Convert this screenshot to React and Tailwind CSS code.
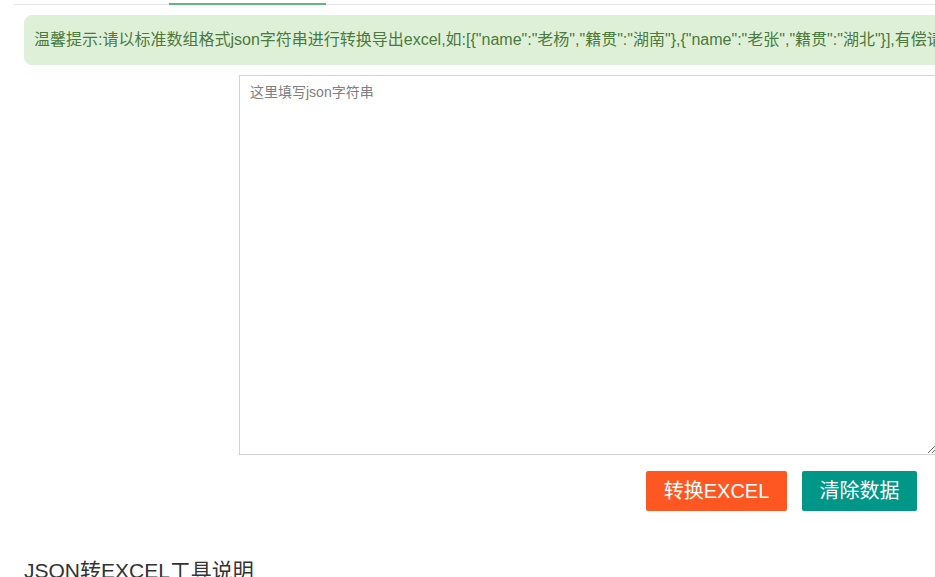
import React, { useState } from "react";

const tip =
  '温馨提示:请以标准数组格式json字符串进行转换导出excel,如:[{"name":"老杨","籍贯":"湖南"},{"name":"老张","籍贯":"湖北"}],有偿请联系作者定制';

const App = () => {
  const [json, setJson] = useState("");

  return (
    <div
      className="w-[935px] h-[577px] overflow-hidden bg-white"
      style={{ fontFamily: '"Liberation Sans", "Noto Sans CJK SC", sans-serif' }}
    >
      {/* tab bar line */}
      <div className="pl-[14px] pt-[3px]">
        <div className="relative h-[2px] border-b border-[#e6e6e6]">
          <div className="absolute left-[155px] top-0 h-[2px] w-[157px] bg-[#5FB878]" />
        </div>
      </div>

      {/* tip */}
      <div className="pl-[24px] pt-[10px]">
        <div className="w-[1200px] h-[50px] flex items-center pl-[10px] rounded-[8px] bg-[#dff0d8] text-[#4a7a3c] text-[16px] whitespace-nowrap">
          {tip}
        </div>
      </div>

      {/* textarea */}
      <div className="pl-[239px] pt-[10px]">
        <textarea
          value={json}
          onChange={(e) => setJson(e.target.value)}
          placeholder="这里填写json字符串"
          className="block w-[698px] h-[380px] border border-[#d2d2d2] px-[10px] py-[6px] text-[14px] leading-[20px] text-[#333] placeholder:text-[#808080] outline-none"
        />
      </div>

      {/* buttons */}
      <div className="flex justify-end gap-[15px] pr-[18px] pt-[16px]">
        <button className="w-[141px] h-[40px] rounded-[2px] bg-[#FF5722] text-white text-[20px]">
          转换EXCEL
        </button>
        <button className="w-[115px] h-[40px] rounded-[2px] bg-[#009688] text-white text-[20px]">
          清除数据
        </button>
      </div>

      {/* description */}
      <h2 className="pl-[24px] pt-[48px] text-[21px] leading-[24px] text-[#333]">
        JSON转EXCEL工具说明
      </h2>
    </div>
  );
};

export default App;
